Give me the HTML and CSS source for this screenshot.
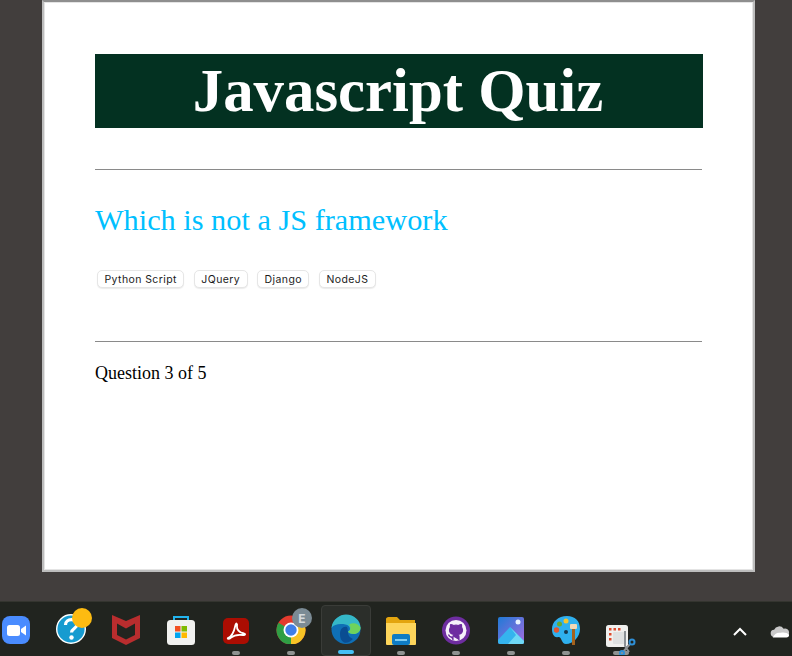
FILE: index.html
```html
<!DOCTYPE html>
<html lang="en">
<head>
    <meta charset="UTF-8">
    <title>Javascript Quiz</title>
    <link rel="stylesheet" href="styles.css">
</head>
<body>
    <div class="desktop">
        <div class="quizWindow">
            <h1 class="title">Javascript Quiz</h1>
            <hr class="rule">
            <h2 class="question">Which is not a JS framework</h2>
            <div class="answers">
                <button class="answer">Python Script</button>
                <button class="answer">JQuery</button>
                <button class="answer">Django</button>
                <button class="answer">NodeJS</button>
            </div>
            <hr class="rule ruleLower">
            <p class="progress">Question 3 of 5</p>
        </div>
    </div>
    <div class="taskbar">
        <div class="apps">
            <div class="app">
                <svg class="icon" viewBox="0 0 30 30"><rect x="1" y="1" width="28" height="28" rx="8" fill="#4a8cff"/><rect x="6" y="10" width="13" height="11" rx="2.5" fill="#fff"/><path d="M20 14l5-3.5v10L20 17z" fill="#fff"/></svg>
            </div>
            <div class="app">
                <svg class="icon iconBadged" viewBox="0 0 36 36"><circle cx="15" cy="21" r="14.300" fill="#169bd0" stroke="#fff" stroke-width="1.400"/><path d="M9.500 17c0-7 11.500-7 11.500-.5 0 4-5.500 4-5.500 8" fill="none" stroke="#fff" stroke-width="3.200"/><circle cx="15.500" cy="29.500" r="2.200" fill="#fff"/><circle cx="26" cy="10" r="10" fill="#fdbb11"/></svg>
            </div>
            <div class="app">
                <svg class="icon" viewBox="0 0 30 30"><path d="M1 0l14 6 14-6v23l-14 7-14-7z" fill="#b92d2e"/><path d="M6 8.500l9 5 9-5v11.500l-9 4.500-9-4.500z" fill="#22241f"/></svg>
            </div>
            <div class="app">
                <svg class="icon" viewBox="0 0 30 30"><path d="M8 7V2h14v5" fill="none" stroke="#22b4ee" stroke-width="2"/><rect x="1" y="5" width="28" height="25" rx="3.500" fill="#f1f1ef"/><rect x="9" y="11" width="5.500" height="5.500" fill="#f25022"/><rect x="15.500" y="11" width="5.500" height="5.500" fill="#7fba00"/><rect x="9" y="17.500" width="5.500" height="5.500" fill="#00a4ef"/><rect x="15.500" y="17.500" width="5.500" height="5.500" fill="#ffb900"/></svg>
            </div>
            <div class="app running">
                <svg class="icon" viewBox="0 0 30 30"><rect x="2" y="3" width="26" height="26" rx="5" fill="#ab0d02"/><path d="M7 23c3-1 6-6 7.500-13 .5-2.500 2-1.500 1.500 1-.5 3 2 7 7 7.500 2 .5 1 2-1 1.500-4-.5-9 0-12 2.500-2 2-4 1.500-3 .5z" fill="none" stroke="#fff" stroke-width="1.800"/></svg>
            </div>
            <div class="app running">
                <svg class="icon iconBadged" viewBox="0 0 36 36"><circle cx="15" cy="22" r="14.500" fill="#e33b2e"/><path d="M15 22L27.500 14.700A14.500 14.500 0 0 1 15 36.500z" fill="#f7c325"/><path d="M15 22L15 36.500A14.500 14.500 0 0 1 2.500 14.700z" fill="#2f9e44"/><circle cx="15" cy="22" r="7.500" fill="#fff"/><circle cx="15" cy="22" r="5.700" fill="#3f7ee8"/><circle cx="26" cy="10" r="10" fill="#7b8b95"/><text class="profile" x="26" y="14.500">E</text></svg>
            </div>
            <div class="app active">
                <svg class="icon" viewBox="0 0 30 30"><circle cx="15" cy="15.500" r="14.500" fill="#0f6fb5"/><path d="M.5 14C1.500 5 9 .5 15 .5c8 0 14.500 6 14.500 13 0 4-3 6.500-7 6.500-3 0-5-1-5.500-2.500 3-.5 3-6-2.500-7C9 9.500 3 10 .5 14z" fill="#35b8c8"/><path d="M29.500 13.500c0 4-3 6.500-7 6.500-3 0-5-1-5.500-2.500 3-.5 3-5 1-7 5-3 10 0 11.500 3z" fill="#6fd35c"/><path d="M9 20c0-5 3-8 7-7 2 4-1 9 6 12-3 3-6 4.500-9 3.500C10 27 9 24 9 20z" fill="#0a4d92"/></svg>
            </div>
            <div class="app running">
                <svg class="icon" viewBox="0 0 30 30"><path d="M0 4C0 3 1 2 2.500 2H11l3 3h15v6H0z" fill="#e3a50f"/><path d="M0 8h30v21a1 1 0 0 1-1 1H1a1 1 0 0 1-1-1z" fill="#fdd55b"/><rect x="6" y="19" width="18" height="11" rx="2" fill="#0f7cc4"/><rect x="9" y="24" width="12" height="2" fill="#7fcdf2"/></svg>
            </div>
            <div class="app running">
                <svg class="icon" viewBox="0 0 30 30"><circle cx="15" cy="15.500" r="14" fill="#6e2da0"/><circle cx="15" cy="15.500" r="10.500" fill="#f6f1fa"/><path d="M12 25v-3c-3 .5-4-1-4.500-2.500M18 25v-3.500c0-1-.5-1.500-1-2 3-.5 4.500-2 4.500-4.500 0-1-.5-2-1-3 .2-1 .2-1.800-.2-2.500-1 0-2 .5-2.800 1-1.500-.4-3.500-.4-5 0-.8-.5-1.800-1-2.800-1-.4.7-.4 1.500-.2 2.500-.5 1-1 2-1 3 0 2.500 1.500 4 4.500 4.500-.5.5-1 1-1 2" fill="#6e2da0" stroke="#6e2da0" stroke-width="1.200"/></svg>
            </div>
            <div class="app running">
                <svg class="icon" viewBox="0 0 30 30"><defs><linearGradient id="sky" x1="0" y1="0" x2="1" y2="1"><stop offset="0" stop-color="#1f7ad6"/><stop offset="1" stop-color="#a56be0"/></linearGradient></defs><rect x="2" y="2" width="26" height="27" rx="2" fill="url(#sky)"/><circle cx="22" cy="7" r="2.500" fill="#e8f2ff"/><path d="M2 25l12-13 14 14v1a2 2 0 0 1-2 2H4a2 2 0 0 1-2-2z" fill="#35b4ee"/><path d="M14 12l14 14v1a2 2 0 0 1-2 2H12l8-9z" fill="#6fd8f5"/></svg>
            </div>
            <div class="app running">
                <svg class="icon" viewBox="0 0 30 30"><path d="M16 1C7 1 1 7 1 14c0 6 3 9 6 8 4-1 3 7 8 7 7 0 14-7 14-15C29 6 24 1 16 1z" fill="#2fb0ee"/><circle cx="5.500" cy="15" r="2.700" fill="#e2562f"/><circle cx="8.500" cy="9" r="2.500" fill="#6aa82f"/><circle cx="15" cy="6" r="2.500" fill="#f5c52c"/><circle cx="15" cy="17" r="2" fill="#16384f"/><rect x="21" y="13" width="3" height="17" fill="#a5621d"/><rect x="19" y="9" width="7" height="5" rx="1" fill="#f0d9b8"/></svg>
            </div>
            <div class="app running snipSlot">
                <svg class="icon snip" viewBox="0 0 32 32"><rect x="1" y="2" width="22" height="22" rx="2.500" fill="#f0f0ee"/><path d="M4 5h2.500v2.500H4zM8.500 5H11v2.500H8.500zM13 5h2.500v2.500H13zM4 10h2.500v2.500H4zM4 15h2.500v2.500H4z" fill="#dd4a2c"/><rect x="8" y="9" width="12" height="12" rx="1" fill="#dfe1e1"/><path d="M20 8v15l4 6M25 21l-7 8" fill="none" stroke="#8c9296" stroke-width="2"/><circle cx="27" cy="19" r="2.500" fill="none" stroke="#2e8fd6" stroke-width="2"/><circle cx="17" cy="30" r="2" fill="none" stroke="#2e8fd6" stroke-width="2"/></svg>
            </div>
        </div>
        <div class="tray">
            <svg class="chevron" viewBox="0 0 16 10"><path d="M2 8l6-6 6 6" fill="none" stroke="#fff" stroke-width="2"/></svg>
            <svg class="cloud" viewBox="0 0 22 14"><path d="M5 13a4 4 0 0 1-.5-8A6 6 0 0 1 15 4a4.500 4.500 0 0 1 6 4.500c0 2.500-1.500 4.500-4 4.500z" fill="#c9c9c9"/><path d="M3 13.500c2-4 5-6 9-5 3-1 7 0 9 2 0 2-1 3-3 3z" fill="#fff"/></svg>
        </div>
    </div>
</body>
</html>
```

FILE: styles.css
```css
html, body {
    margin: 0;
    height: 100%;
}
body {
    display: flex;
    flex-direction: column;
    height: 656px;
    overflow: hidden;
    background-color: #423e3d;
}
.desktop {
    flex: 1;
    padding-left: 42px;
}
.quizWindow {
    box-sizing: border-box;
    width: 713px;
    height: 572px;
    padding: 52px 50px 0 51px;
    background-color: #fff;
    border: 2px solid #bdbdbd;
    border-top-color: #8e8e8e;
    box-shadow: inset 0 0 0 1px #e4e4e4;
    font-family: "Liberation Serif", serif;
}
.title {
    margin: 0;
    height: 74px;
    padding-right: 2px;
    line-height: 74px;
    background-color: #033121;
    color: #fff;
    font-size: 60.8px;
    font-weight: bold;
    text-align: center;
}
.rule {
    margin: 41px 1px 0 0;
    border: 0;
    border-top: 1px solid #8a8a8a;
    height: 0;
}
.question {
    margin: 32px 0 0 0;
    color: #00bfff;
    font-size: 30.3px;
    font-weight: normal;
    line-height: 36px;
}
.answers {
    display: flex;
    gap: 9.5px;
    margin: 32px 0 0 2px;
}
.answer {
    height: 18px;
    padding: 1px 6.5px 0 6.5px;
    background-color: #fff;
    border: 1px solid #e6e6e6;
    border-radius: 5px;
    box-shadow: 0 1px 1px rgba(0, 0, 0, 0.08);
    color: #1c1c1c;
    font-family: Inter, sans-serif;
    font-size: 10.5px;
    letter-spacing: 0.4px;
    line-height: 15px;
}
.ruleLower {
    margin-top: 53px;
}
.progress {
    margin: 21px 0 0 0;
    color: #000;
    font-size: 18px;
    line-height: 21px;
}
.taskbar {
    display: flex;
    justify-content: space-between;
    align-items: flex-start;
    height: 55px;
    background-color: #21241f;
    border-top: 1px solid #34352f;
    box-sizing: border-box;
}
.apps {
    display: flex;
    margin-left: -12px;
}
.app {
    display: flex;
    flex-direction: column;
    align-items: center;
    box-sizing: border-box;
    width: 55px;
    height: 54px;
    padding-top: 13px;
    position: relative;
}
.icon {
    width: 30px;
    height: 30px;
    flex: none;
}
.iconBadged {
    width: 36px;
    height: 36px;
    margin: -7px 0 0 6px;
}
.running::after, .active::after {
    content: "";
    position: absolute;
    left: 24px;
    bottom: 1px;
    width: 8px;
    height: 4px;
    border-radius: 2px;
    background-color: #8f9291;
}
.active {
    background-color: #2b2e2a;
    border: 1px solid #3a3c38;
    border-radius: 4px;
    margin: 3px 2px 0 3px;
    width: 50px;
    height: 51px;
    padding-top: 8px;
}
.active::after {
    left: 16px;
    width: 16px;
    background-color: #45c0f5;
}
.snipSlot::after {
    left: 20px;
    width: 16px;
}
.snip {
    position: relative;
    z-index: 1;
    width: 32px;
    height: 32px;
    margin-top: 8px;
}
.profile {
    fill: #d5dadd;
    font-family: Inter, sans-serif;
    font-size: 12px;
    font-weight: bold;
    text-anchor: middle;
}
.tray {
    display: flex;
    align-items: center;
    gap: 22px;
    padding-top: 23px;
    margin-right: 2px;
}
.chevron {
    width: 16px;
    height: 10px;
}
.cloud {
    width: 20px;
    height: 13px;
}
```
